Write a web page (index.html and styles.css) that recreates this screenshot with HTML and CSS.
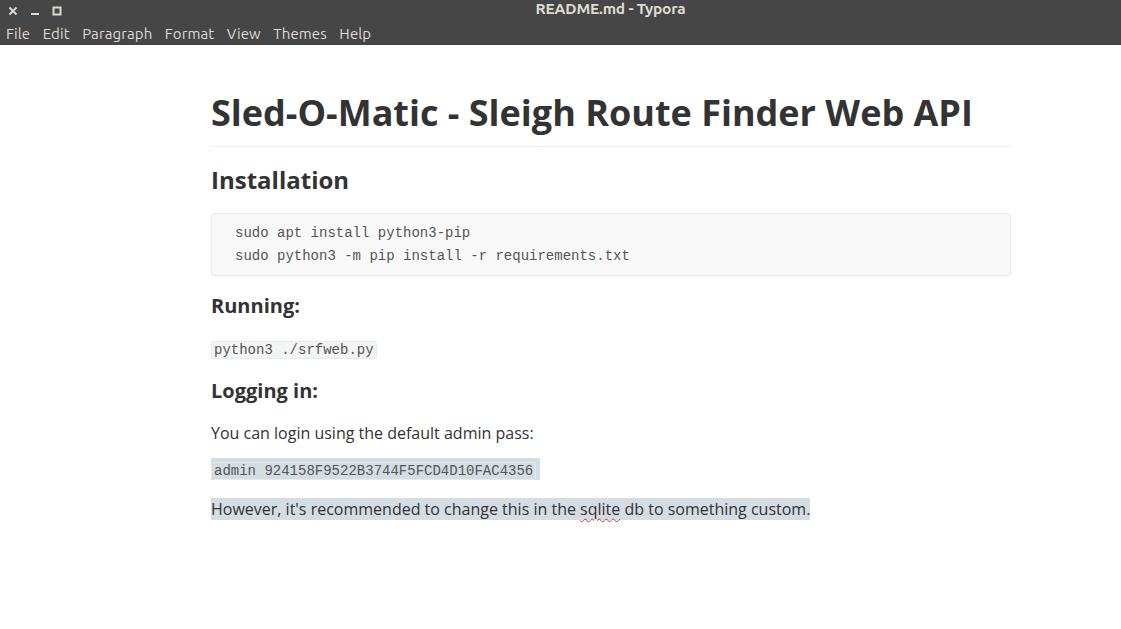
FILE: index.html
```html
<!DOCTYPE html>
<html>
<head>
<meta charset="utf-8">
<link rel="stylesheet" href="styles.css">
</head>
<body>
<div class="window">
  <header class="chrome">
    <div class="titlebar">
      <div class="controls">
        <svg class="ctl" width="10" height="10" viewBox="0 0 10 10"><path d="M1.5 1.5 L8.5 8.5 M8.5 1.5 L1.5 8.5" stroke="#dcdad5" stroke-width="2"/></svg>
        <svg class="ctl" width="10" height="10" viewBox="0 0 10 10"><rect x="1" y="7" width="8" height="2" fill="#dcdad5"/></svg>
        <svg class="ctl" width="10" height="10" viewBox="0 0 10 10"><rect x="1.5" y="1.5" width="7" height="7" fill="none" stroke="#dcdad5" stroke-width="2"/></svg>
      </div>
      <div class="title">README.md - Typora</div>
    </div>
    <nav class="menubar">
      <span>File</span><span>Edit</span><span>Paragraph</span><span>Format</span><span>View</span><span>Themes</span><span>Help</span>
    </nav>
  </header>
  <main class="editor">
    <article class="doc">
      <h1>Sled-O-Matic - Sleigh Route Finder Web API</h1>
      <h2>Installation</h2>
      <pre class="fence">sudo apt install python3-pip
sudo python3 -m pip install -r requirements.txt</pre>
      <h4>Running:</h4>
      <p class="codep"><code>python3 ./srfweb.py</code></p>
      <h4>Logging in:</h4>
      <p>You can login using the default admin pass:</p>
      <p class="codep"><span class="sel"><code>admin 924158F9522B3744F5FCD4D10FAC4356</code>&nbsp;</span></p>
      <p><span class="sel">However, it's recommended to change this in the <span class="typo">sqlite</span> db to something custom.</span></p>
    </article>
  </main>
</div>
</body>
</html>
```
FILE: styles.css
```css
html, body {
  margin: 0;
  padding: 0;
  background: #ffffff;
}
.window {
  width: 1121px;
  height: 629px;
  overflow: hidden;
  display: flex;
  flex-direction: column;
}
.chrome {
  background: #464646;
  color: #dfdbd2;
  font-family: "Ubuntu", "Noto Sans", "DejaVu Sans", sans-serif;
}
.titlebar {
  height: 22px;
  position: relative;
  display: flex;
  align-items: center;
}
.controls {
  display: flex;
  gap: 12px;
  padding-left: 8px;
}
.ctl {
  display: block;
}
.title {
  position: absolute;
  left: 100px;
  right: 0;
  top: 0;
  text-align: center;
  font-weight: bold;
  font-size: 15.5px;
  letter-spacing: -0.2px;
  color: #dfdbd2;
}
.menubar {
  height: 23px;
  display: flex;
  align-items: center;
  gap: 12.5px;
  padding-left: 6px;
  font-size: 15px;
  letter-spacing: 0.1px;
}
.editor {
  flex: 1;
  background: #fff;
}
.doc {
  width: 800px;
  margin-left: 211px;
  font-family: "Open Sans", "Noto Sans", sans-serif;
  color: #333333;
  font-size: 16px;
  line-height: 1.6;
}
h1 {
  font-size: 36px;
  line-height: 1.2;
  font-weight: bold;
  margin: 0;
  padding-top: 46px;
  padding-bottom: 12px;
  border-bottom: 1px solid #eeeeee;
}
h2 {
  font-size: 24px;
  line-height: 1.2;
  font-weight: bold;
  margin: 19px 0 0;
}
.fence {
  margin: 18px 0 0;
  background: #f8f8f8;
  border: 1px solid #e7eaed;
  border-radius: 3px;
  padding: 8px 23px 7px;
  font-family: "Courier New", "Nimbus Mono PS", "FreeMono", "Liberation Mono", monospace;
  font-size: 14px;
  line-height: 23px;
  color: #555;
}
h4 {
  font-size: 20px;
  line-height: 1.2;
  font-weight: bold;
  margin: 18px 0 0;
}
p {
  margin: 0;
}
.codep {
  margin-top: 16px;
}
code {
  font-family: "Courier New", "Nimbus Mono PS", "FreeMono", "Liberation Mono", monospace;
  font-size: 14px;
  background: #f3f4f4;
  border: 1px solid #e7eaed;
  border-radius: 3px;
  padding: 0 2px;
  color: #555;
}
h4 + .codep {
  margin-top: 18px;
}
.codep + h4 {
  margin-top: 17px;
}
h4 + p {
  margin-top: 18px;
}
p + .codep {
  margin-top: 11px;
}
.codep + p {
  margin-top: 14px;
}
.sel {
  background: #d4dde4;
}
.sel code {
  background: #d4dde4;
}
.typo {
  text-decoration: underline wavy #e03030;
  text-decoration-thickness: 1px;
  text-underline-offset: 3px;
}
```
